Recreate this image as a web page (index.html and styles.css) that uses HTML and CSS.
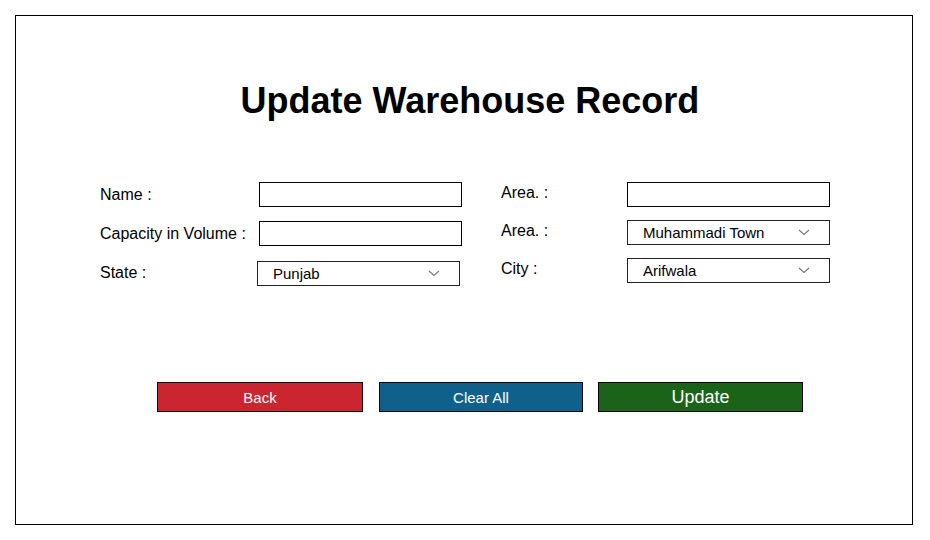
FILE: index.html
```html
<!DOCTYPE html>
<html lang="en">
<head>
<meta charset="utf-8">
<title>Update Warehouse Record</title>
<link rel="stylesheet" href="styles.css">
</head>
<body>
<div class="frame">
  <h1 class="title">Update Warehouse Record</h1>
  <div class="form">
    <div class="col col-left">
      <div class="row">
        <span class="label">Name :</span>
        <div class="input"></div>
      </div>
      <div class="row">
        <span class="label">Capacity in Volume :</span>
        <div class="input"></div>
      </div>
      <div class="row">
        <span class="label">State :</span>
        <div class="select shift"><span>Punjab</span>
          <svg class="chev" width="12" height="7" viewBox="0 0 12 7"><path d="M1 1 L6 5.5 L11 1" fill="none" stroke="#7a7a7a" stroke-width="1.2"/></svg>
        </div>
      </div>
    </div>
    <div class="col col-right">
      <div class="row">
        <span class="label up">Area. :</span>
        <div class="input"></div>
      </div>
      <div class="row">
        <span class="label up">Area. :</span>
        <div class="select"><span>Muhammadi Town</span>
          <svg class="chev" width="12" height="7" viewBox="0 0 12 7"><path d="M1 1 L6 5.5 L11 1" fill="none" stroke="#7a7a7a" stroke-width="1.2"/></svg>
        </div>
      </div>
      <div class="row">
        <span class="label up">City :</span>
        <div class="select"><span>Arifwala</span>
          <svg class="chev" width="12" height="7" viewBox="0 0 12 7"><path d="M1 1 L6 5.5 L11 1" fill="none" stroke="#7a7a7a" stroke-width="1.2"/></svg>
        </div>
      </div>
    </div>
  </div>
  <div class="actions">
    <button class="btn btn-back">Back</button>
    <button class="btn btn-clear">Clear All</button>
    <button class="btn btn-update">Update</button>
  </div>
</div>
</body>
</html>
```
FILE: styles.css
```css
html, body {
  margin: 0;
  padding: 0;
  background: #ffffff;
}
body {
  font-family: "Liberation Sans", Arial, sans-serif;
  color: #000;
}
.frame {
  box-sizing: border-box;
  margin: 15px 0 0 15px;
  width: 898px;
  height: 510px;
  border: 1px solid #000;
}
.title {
  margin: 65px 0 0 0;
  padding-left: 12px;
  text-align: center;
  font-size: 36px;
  line-height: 40px;
  font-weight: bold;
}
.form {
  display: flex;
  margin-top: 61px;
  padding-left: 84px;
  gap: 39px;
}
.col {
  display: flex;
  flex-direction: column;
}
.col-left { gap: 14px; }
.col-right { gap: 13px; }
.row {
  display: flex;
  align-items: center;
  height: 25px;
}
.col-left .label { width: 159px; }
.col-right .label { width: 126px; }
.label {
  font-size: 16px;
  line-height: 20px;
}
.label.up { position: relative; top: -2px; }
.input, .select {
  box-sizing: border-box;
  width: 203px;
  height: 25px;
  border: 1px solid #000;
  background: #fff;
}
.select {
  display: flex;
  align-items: center;
  justify-content: space-between;
  padding: 0 19px 0 15px;
  font-size: 15px;
  border-color: #222;
}
.select.shift { margin-left: -2px; margin-top: 2px; }
.chev { display: block; }
.actions {
  display: flex;
  margin-top: 97px;
  padding-left: 141px;
}
.btn {
  box-sizing: border-box;
  height: 30px;
  border: 1px solid #000;
  color: #fff;
  font-family: "Liberation Sans", Arial, sans-serif;
  font-size: 15px;
  padding: 0;
  cursor: pointer;
}
.btn-back { background: #cb2530; width: 206px; }
.btn-clear { background: #0f618c; width: 204px; margin-left: 16px; }
.btn-update { background: #1b6318; width: 205px; margin-left: 15px; font-size: 18px; }
```
